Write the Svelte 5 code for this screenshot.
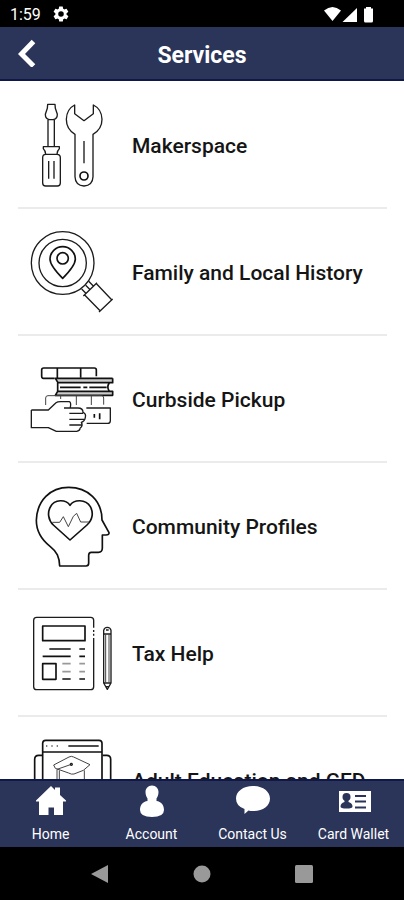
<script>
  const services = [
    { id: 'maker', name: 'Makerspace', box: '12 18 288 288' },
    { id: 'history', name: 'Family and Local History', box: '12 9 288 288' },
    { id: 'pickup', name: 'Curbside Pickup', box: '12 0 288 288' },
    { id: 'profiles', name: 'Community Profiles', box: '12 6 288 288' },
    { id: 'tax', name: 'Tax Help', box: '12 -3 288 288' },
    { id: 'education', name: 'Adult Education and GED', box: '72 63 288 288' }
  ];
  const tabs = ['Home', 'Account', 'Contact Us', 'Card Wallet'];
</script>

<div class="app">
  <div class="status">
    <span class="time">1:59</span>
    <svg class="gear" viewBox="0 0 24 24" width="18" height="18" fill="#fff"><path d="M19.4 13a7.500 7.500 0 0 0 0-2l2.100-1.650a.5.5 0 0 0 .1-.65l-2-3.450a.5.5 0 0 0-.6-.2l-2.500 1a7.300 7.300 0 0 0-1.700-1l-.4-2.650a.5.500 0 0 0-.5-.4h-4a.5.5 0 0 0-.5.4L9.100 5.050a7.300 7.300 0 0 0-1.700 1l-2.500-1a.5.5 0 0 0-.6.2l-2 3.450a.5.5 0 0 0 .1.650L4.500 11a7.500 7.500 0 0 0 0 2l-2.100 1.650a.5.5 0 0 0-.1.650l2 3.450c.1.200.4.300.6.200l2.500-1a7.300 7.300 0 0 0 1.700 1l.4 2.650c0 .2.2.4.5.4h4c.3 0 .5-.2.500-.4l.4-2.650a7.300 7.300 0 0 0 1.700-1l2.500 1c.2.100.5 0 .6-.2l2-3.450a.5.5 0 0 0-.1-.650zM12 15.700a3.700 3.700 0 1 1 0-7.400 3.700 3.700 0 0 1 0 7.400z" /></svg>
    <svg class="signals" viewBox="0 0 52 18" width="52" height="18" fill="#fff">
      <path d="M1 5.500Q9.500 -1.500 18 5.500L9.500 16Z" />
      <path d="M19.500 17L34 3V17Z" />
      <path d="M41 3.500h2V2h5v1.500h2V16a1.500 1.500 0 0 1-1.500 1.500h-6A1.500 1.500 0 0 1 41 16Z" />
    </svg>
  </div>

  <header>
    <button class="back" aria-label="Back">
      <svg viewBox="0 0 18 28" width="18" height="28" fill="none" stroke="#fff" stroke-width="5"><path d="M15.500 2.500L3.500 15L15.500 27" /></svg>
    </button>
    <h1>Services</h1>
  </header>

  <main>
    {#each services as s (s.id)}
      <a class="row" href="#{s.id}">
        <svg class="art" viewBox={s.box} aria-hidden="true">
          {#if s.id === 'maker'}
            <path d="M83 40h22l1 12 6 18q0 15-13 16h-10q-13-1-13-16l6-18ZM84 87v79M103 87v79M70 167h48v6q-7 6-7 17h-34q0-11-7-17ZM77 190h34q10 0 10 10v76q0 9-9 9H77q-9 0-9-9v-76q0-10 9-10ZM86 210v53M102 210v53" />
            <path d="M164 42V68L192 89L220 68V42Q245 54 246 85Q246 115 219 130V257Q218 283 192 285Q166 283 165 257V130Q139 115 139 85Q140 54 164 42ZM192 150v67" />
            <circle class="bold" cx="192" cy="255" r="12" />
          {:else if s.id === 'history'}
            <circle cx="128" cy="126" r="94" />
            <circle cx="128" cy="126" r="71" />
            <path class="bold" d="M128 172Q90 134 90 114A38 37 0 0 1 166 114Q166 134 128 172Z" />
            <circle class="bold" cx="128" cy="112" r="17" />
            <path d="M206 181l14 14M185 204l14 14M190 225l41-40M194 222l47 48M228 187l47 49M237 273l41-39M197 193l12 12" />
          {:else if s.id === 'pickup'}
            <path class="bold" d="M104 82H70q-5 0-5-6V57q0-6 6-6H223q6 0 6 6V76M112 52V82M182 52V80" />
            <path class="band" d="M106 82H276V94H110ZM113 121H276V132H106Z" />
            <path class="bold" d="M278 82H106l8 13H278V82M113 95V121H268q-9-13 0-26M120 109h62M190 109h12M208 109h52M113 121l-7 12H278V121Z" />
            <path class="thin" d="M77 162V141q0-7 7-7H245q6 0 6 7V161M122 135v9M169 135v27M214 135v27" />
            <path d="M34 177H85L108 155Q112 152 122 152H148Q154 154 151 169M34 177V230H85L109 241H170Q180 240 180 232M132 171H174Q189 171 189 184Q199 188 196 199Q194 211 184 214Q190 224 180 232M148 187h41M148 205h44M148 222h36M199 171H271V209q0 8-8 8H200" />
            <path class="bold" d="M223 189v11M239 187v18" />
          {:else if s.id === 'profiles'}
            <path class="bold" d="M119 270C118 242 111 228 91 212C60 188 49 162 49 133C51 73 91 34 146 34C203 34 246 73 246 132L267 170Q268 177 258 177H247V216Q247 229 235 229H214Q206 229 206 238V262Q206 270 198 270Z" />
            <path class="bold" d="M150 192L100 147C84 132 82 109 91 93C104 68 138 70 150 88C162 70 197 68 211 92C221 110 218 132 201 147Z" />
            <path class="thin" d="M97 139h22l11-17 15 30 15-31 10-9 12 26h25" />
          {:else if s.id === 'tax'}
            <rect x="41" y="34" width="180" height="217" rx="9" />
            <path class="gap" d="M221 65v7M221 78v5M221 89v7" />
            <path class="bold" d="M68 60H195V104H68ZM68 173H108V220H68ZM88 129h64M68 151h84M178 129h17M178 151h17M127 219h25M178 219h17" />
            <path class="soft" d="M127 173h25M178 173h17M127 197h25M178 197h17" />
            <path d="M251 231V73Q253 64 262 64Q271 64 273 73V231L262 250ZM251 84h22M251 231h22M258 72h8M258 242h8" />
            <path class="thin" d="M257 85v145M267 85v145" />
          {:else}
            <path class="bold" d="M128 300V97q0-9 9-9H297q9 0 9 9V300M128 123H306M205 105h91" />
            <path class="dots" d="M138 105h4M154 105h4M170 105h4" />
            <path class="bold" d="M104 300V145q0-12 12-12h10M332 300V145q0-12-12-12h-12" />
            <path class="thin" d="M161 162L207 138Q214 134 221 138L270 161L250 178L222 189Q214 191 206 186L166 172ZM214 160L171 175V220M178 178V212Q215 232 253 212V178" />
            <circle cx="214" cy="160" r="3" />
          {/if}
        </svg>
        <span>{s.name}</span>
      </a>
    {/each}
  </main>

  <nav>
    {#each tabs as tab, i}
      <a href="#tab-{i}">
        <svg viewBox="0 0 36 34" width="36" height="34" fill="#fff" aria-hidden="true">
          {#if i === 0}
            <path d="M3 16.500L18 2L22 6V3.500H27V11L33 16.500V17.500H30V31H21V23.500H15.500V31H6V17.500H3Z" />
          {:else if i === 1}
            <path d="M18 1.500C22 1.500 24.500 4.500 24.500 8C24.500 11 23.500 13 22.500 14.500V17C27 17.500 30 21 30 26Q30 33 18 33Q6 33 6 26C6 21 9 17.500 13.500 17V14.500C12.500 13 11.500 11 11.500 8C11.500 4.500 14 1.500 18 1.500Z" />
          {:else if i === 2}
            <path d="M18 2C28 2 35 7.500 35 14.500C35 22 28 27 19 27Q15 27 13.500 26.500L9.500 30V25Q1 22 1 14.500C1 7.500 8 2 18 2Z" />
          {:else}
            <path d="M3 7H35V28H3Z" />
            <g fill="#2b3459"><circle cx="10.500" cy="13" r="4" /><path d="M8.500 15h4v3q4 1 4 4.500q0 2-6 2t-6-2Q4.500 19 8.500 18Z" /></g>
            <path d="M19 12H30M19 17.500H30M19 23.500H30" stroke="#2b3459" stroke-width="2" />
          {/if}
        </svg>
        <span>{tab}</span>
      </a>
    {/each}
  </nav>

  <div class="system">
    <button aria-label="System back"><svg viewBox="0 0 20 20" width="20" height="20"><path d="M18 1V19L1 10Z" /></svg></button>
    <button aria-label="System home"><svg viewBox="0 0 20 20" width="20" height="20"><circle cx="10" cy="10" r="8.500" /></svg></button>
    <button aria-label="Recent apps"><svg viewBox="0 0 20 20" width="20" height="20"><rect x="1" y="1" width="18" height="18" rx="1.500" /></svg></button>
  </div>
</div>

<style>
  .app {
    display: flex;
    flex-direction: column;
    height: 100vh;
    background: #fff;
    font-family: Roboto, "Liberation Sans", sans-serif;
  }
  svg {
    display: block;
    flex: none;
  }
  button {
    display: flex;
    border: 0;
    background: none;
    padding: 0;
  }
  .status {
    display: flex;
    align-items: center;
    height: 27px;
    flex: none;
    padding: 0 29px 0 10px;
    background: #000;
    color: #fff;
    font-size: 16px;
    line-height: 20px;
  }
  .time {
    padding-top: 2px;
  }
  .gear {
    margin-left: 11px;
  }
  .signals {
    margin-left: auto;
  }
  header {
    display: grid;
    grid-template-columns: 40px 1fr 40px;
    align-items: center;
    box-sizing: border-box;
    height: 54px;
    flex: none;
    border-bottom: 2px solid #10184a;
    background: #2b3459;
    color: #fff;
  }
  .back {
    margin-left: 18px;
  }
  h1 {
    margin: 0;
    padding-top: 6px;
    text-align: center;
    font-size: 23px;
    line-height: 28px;
    font-weight: 700;
  }
  main {
    flex: 1;
    min-height: 0;
    padding: 1px 17px 0 18px;
    overflow-y: auto;
    scrollbar-width: none;
  }
  .row {
    display: flex;
    align-items: center;
    gap: 12px;
    box-sizing: border-box;
    height: 127px;
    padding-left: 6px;
    border-bottom: 2px solid #ebebeb;
    color: #151515;
    text-decoration: none;
    font-size: 21px;
    line-height: 24px;
    font-weight: 500;
  }
  .row span {
    padding-top: 2px;
    white-space: nowrap;
  }
  .art {
    width: 96px;
    height: 96px;
    fill: none;
    stroke: #1c1c1c;
    stroke-width: 4;
    stroke-linejoin: round;
  }
  .art .bold {
    stroke: #111;
    stroke-width: 5;
  }
  .art .thin {
    stroke: #444;
    stroke-width: 3;
  }
  .art .band {
    fill: #ccc;
    stroke: none;
  }
  .art .soft {
    stroke: #999;
    stroke-width: 5;
  }
  .art .dots {
    stroke: #555;
    stroke-width: 4;
  }
  .art .gap {
    stroke: #fff;
    stroke-width: 8;
  }
  nav {
    display: grid;
    grid-template-columns: repeat(4, 1fr);
    box-sizing: border-box;
    height: 68px;
    flex: none;
    border-top: 2px solid #10184a;
    background: #2b3459;
  }
  nav a {
    display: flex;
    flex-direction: column;
    align-items: center;
    gap: 8px;
    padding-top: 3px;
    color: #fff;
    text-decoration: none;
    font-size: 14px;
    line-height: 16px;
    white-space: nowrap;
  }
  .system {
    display: flex;
    align-items: center;
    justify-content: space-between;
    height: 53px;
    flex: none;
    padding: 0 90px;
    background: #000;
  }
  .system svg {
    fill: #999;
  }
</style>
